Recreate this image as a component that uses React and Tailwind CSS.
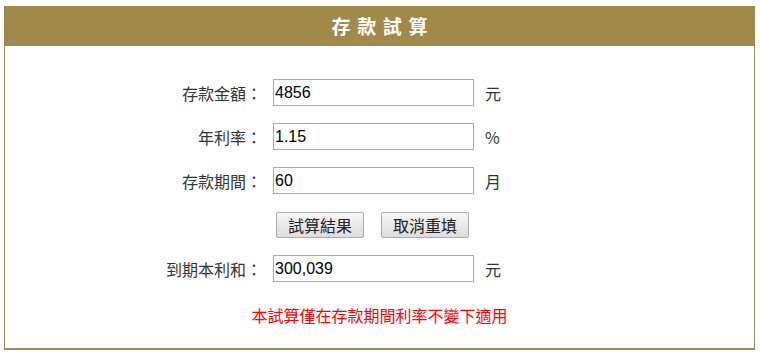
import React, { useState } from 'react';

const FONT = { fontFamily: '"Noto Sans CJK TC", "Liberation Sans", sans-serif' };

function Row({ label, value, unit }) {
  return (
    <div className="flex items-center h-[27px]">
      <label className="w-[105px] text-right text-[16px] text-[#333] leading-none">{label}</label>
      <input
        value={value}
        readOnly
        className="ml-[11px] w-[201px] h-[27px] border border-[#a9a9a9] px-[1px] text-[16px] text-black outline-none font-['Liberation_Sans',sans-serif]"
      />
      <span className="ml-[11px] text-[16px] text-[#333] leading-none">{unit}</span>
    </div>
  );
}

export default function App() {
  const [amount] = useState('4856');
  const [rate] = useState('1.15');
  const [months] = useState('60');

  return (
    <div className="w-[760px] h-[358px] bg-white pt-[6px] pl-[4px]" style={FONT}>
      <div className="w-[751px] h-[344px] border border-[#9e8a4e] border-b-2">
        <div className="h-[40px] -mx-px -mt-px bg-[#a0894b] flex items-center justify-center">
          <h1 className="text-white text-[19px] font-bold tracking-[0.35em] pl-[0.35em]">存款試算</h1>
        </div>

        {/* Form */}
        <div className="pt-[33px] pl-[152px] flex flex-col gap-[17px]">
          <Row label="存款金額：" value={amount} unit="元" />
          <Row label="年利率：" value={rate} unit="%" />
          <Row label="存款期間：" value={months} unit="月" />

          <div className="flex gap-[17px] pl-[119px] mt-[1px]">
            <button className="w-[88px] h-[26px] border border-[#adadad] rounded-[2px] bg-gradient-to-b from-[#f6f6f6] to-[#dddddd] text-[16px] text-[#222] leading-none">試算結果</button>
            <button className="w-[88px] h-[26px] border border-[#adadad] rounded-[2px] bg-gradient-to-b from-[#f6f6f6] to-[#dddddd] text-[16px] text-[#222] leading-none">取消重填</button>
          </div>

          <Row label="到期本利和：" value="300,039" unit="元" />
        </div>

        <p className="mt-[25px] text-center text-[16px] text-[#ff0000] leading-none">本試算僅在存款期間利率不變下適用</p>
      </div>
    </div>
  );
}
